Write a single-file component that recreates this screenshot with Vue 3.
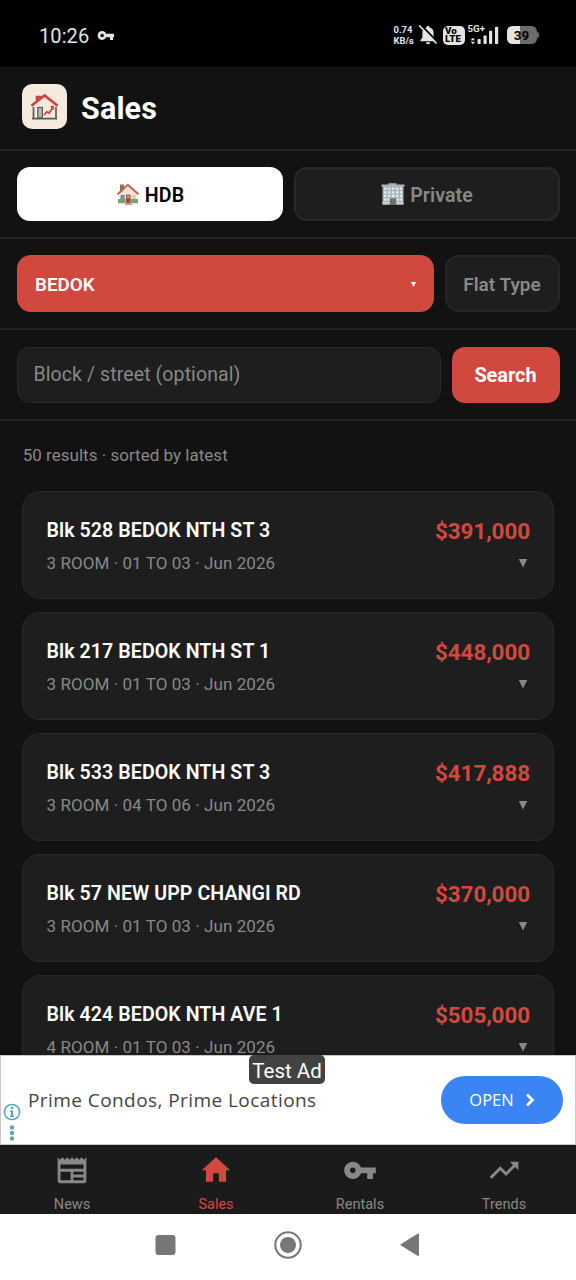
<script setup>
const listings = [
  { title: 'Blk 528 BEDOK NTH ST 3', meta: '3 ROOM · 01 TO 03 · Jun 2026', price: '$391,000' },
  { title: 'Blk 217 BEDOK NTH ST 1', meta: '3 ROOM · 01 TO 03 · Jun 2026', price: '$448,000' },
  { title: 'Blk 533 BEDOK NTH ST 3', meta: '3 ROOM · 04 TO 06 · Jun 2026', price: '$417,888' },
  { title: 'Blk 57 NEW UPP CHANGI RD', meta: '3 ROOM · 01 TO 03 · Jun 2026', price: '$370,000' },
  { title: 'Blk 424 BEDOK NTH AVE 1', meta: '4 ROOM · 01 TO 03 · Jun 2026', price: '$505,000' },
]

const keyPath =
  'M12.65 10C11.83 7.67 9.61 6 7 6c-3.31 0-6 2.69-6 6s2.69 6 6 6c2.61 0 4.83-1.67 5.65-4H17v4h4v-4h2v-4H12.65zM7 14c-1.1 0-2-.9-2-2s.9-2 2-2 2 .9 2 2-.9 2-2 2z'

const tabs = [
  {
    label: 'News',
    path: 'M20,11H4V8H20M20,15H13V13H20M20,19H13V17H20M11,19H4V13H11M20.33,4.67L18.67,3L17,4.67L15.33,3L13.67,4.67L12,3L10.33,4.67L8.67,3L7,4.67L5.33,3L3.67,4.67L2,3V19A2,2 0 0,0 4,21H20A2,2 0 0,0 22,19V3L20.33,4.67Z',
  },
  { label: 'Sales', active: true, path: 'M10,20V14H14V20H19V12H22L12,3L2,12H5V20H10Z' },
  { label: 'Rentals', path: keyPath },
  {
    label: 'Trends',
    path: 'M16 6l2.29 2.29-4.88 4.88-4-4L2 16.59 3.41 18l6-6 4 4 6.3-6.29L22 12V6z',
  },
]
</script>

<template>
  <div class="screen">
    <div class="status">
      <span class="clock">10:26</span>
      <svg class="vpn" viewBox="0 0 18 11"><path fill-rule="evenodd" d="M5.1 1a4.4 4.4 0 1 0 4 6.2h3.9v2.7h3V7.2h1V3.8H9.2A4.4 4.4 0 0 0 5.1 1zm0 2.7a1.8 1.8 0 1 1 0 3.6 1.8 1.8 0 0 1 0-3.6z" /></svg>
      <div class="status-right">
        <div class="speed"><span>0.74</span><span>KB/s</span></div>
        <svg class="bell" viewBox="0 0 20 22">
          <path d="M10 2c1 0 1.6.7 1.6 1.6 2.8.7 4 2.800 4 5.400v4.500l2 2.700v1H2.400v-1l2-2.700V9c0-2.600 1.400-4.700 4-5.400C8.400 2.700 9 2 10 2z" />
          <path d="M8 18.300h4.200a2.100 1.900 0 0 1-4.200 0z" />
          <path class="bell-gap" d="M2.500.6L20 18.400" />
          <path class="bell-slash" d="M1.200 1.500L18.500 19.500" />
        </svg>
        <div class="volte"><span>Vo</span><span>LTE</span></div>
        <div class="signal">
          <span class="net">5G+</span>
          <svg viewBox="0 0 30 20">
            <path d="M2.900 12.800l2.200 2.500H.7zM.7 16.700h4.400l-2.200 2.500z" />
            <rect x="7.500" y="14" width="3.200" height="5" rx=".8" />
            <rect x="13.500" y="10.500" width="3.200" height="8.500" rx=".8" />
            <rect x="19" y="5.800" width="3.200" height="13.200" rx=".8" />
            <rect x="25" y="1.800" width="3.200" height="17.200" rx=".8" />
          </svg>
        </div>
        <div class="battery"><span>39</span></div>
      </div>
    </div>

    <header class="header">
      <div class="logo">
        <svg viewBox="0 0 45 45">
          <path d="M11.500 23v11M34 23v11M10 34.600h25" fill="none" stroke="#5c5a56" stroke-width="1.700" />
          <rect x="15.800" y="23.500" width="4.600" height="10.300" fill="#b8b8b5" stroke="#5c5a56" stroke-width="1.200" />
          <path d="M15 17.500V13h3v2M9.500 21.800L22.500 11.500l13.200 10.300" fill="none" stroke="#c8463d" stroke-width="2.600" />
          <path d="M22 31l2.800-3.200 2.300 1.300 3.700-5.300" fill="none" stroke="#c8463d" stroke-width="1.800" />
          <path d="M28 22.300l4-.5-.3 4.500z" fill="#c8463d" />
        </svg>
      </div>
      <h1>Sales</h1>
    </header>

    <section class="row row-market">
      <button class="market on">
        <svg class="emoji" viewBox="0 0 24 24">
          <path d="M4 2.500h4v9H4z" fill="#9b6654" />
          <path d="M3.500 11.500L12.500 4l8 7.500V20h-17z" fill="#efe3d2" />
          <path d="M1.500 12.500L11.800 2.800l10.700 9.500" fill="none" stroke="#b9684e" stroke-width="2" />
          <path d="M2 17h7.500v4.200H2zM15 17h7v4.200h-7z" fill="#7fa06c" />
          <rect x="4.500" y="13" width="4.200" height="4" fill="#76929b" />
          <rect x="16" y="13" width="3.500" height="4" fill="#c9d0c2" />
          <rect x="10" y="12.600" width="4.600" height="9" fill="#a34e37" />
          <rect x="11" y="13.700" width="2.500" height="2.300" fill="#cda38b" />
          <path d="M9 21h7v2.200H9z" fill="#b6a69b" />
        </svg>
        <span>HDB</span>
      </button>
      <button class="market">
        <svg class="emoji" viewBox="0 0 24 24">
          <path d="M7.500 1.300h8v2h-8zM.500 2.500h23v2h-1V22.500h-21v-18h-1z" fill="#a9b5b8" />
          <path d="M3 6.700h2.500M7 6.700h2.500M11 6.700h2.500M15 6.700h2.500M19 6.700h2.300M3 10.300h2.500M7 10.300h2.500M11 10.300h2.500M15 10.300h2.500M19 10.300h2.300M3 13.900h2.500M7 13.900h2.500M11 13.900h2.500M15 13.900h2.500M19 13.900h2.300M3 17.500h2.500M6.500 17.500H8M16 17.500h2M19 17.500h2.300" stroke="#dcebee" stroke-width="2.300" />
          <path d="M9 16.500h6v6H9z" fill="#686f70" />
          <path d="M1.500 20h7v2.500h-7zM15.500 20h7v2.500h-7z" fill="#c8d0cf" />
        </svg>
        <span>Private</span>
      </button>
    </section>

    <section class="row row-town">
      <button class="town"><span>BEDOK</span><i class="caret small"></i></button>
      <button class="flat"><span>Flat Type</span></button>
    </section>

    <section class="row row-search">
      <div class="field">Block / street (optional)</div>
      <button class="search"><span>Search</span></button>
    </section>

    <main class="results">
      <p class="summary">50 results · sorted by latest</p>
      <article v-for="item in listings" :key="item.title" class="card">
        <div class="info">
          <div class="title">{{ item.title }}</div>
          <div class="meta">{{ item.meta }}</div>
        </div>
        <div class="side">
          <div class="price">{{ item.price }}</div>
          <i class="caret"></i>
        </div>
      </article>
    </main>

    <aside class="ad">
      <svg class="adinfo" viewBox="0 0 18 40">
        <circle cx="9" cy="10" r="7.600" fill="none" stroke="#58a9b8" stroke-width="1.500" />
        <circle cx="9" cy="6" r="1.300" />
        <path d="M7 8.500h3v5h1v1.500H7v-1.500h1V10H7z" />
        <circle cx="9" cy="25.500" r="2.200" />
        <circle cx="9" cy="31" r="2.200" />
        <circle cx="9" cy="36.500" r="2.200" />
      </svg>
      <span class="adtext">Prime Condos, Prime Locations</span>
      <button class="open">
        <span>OPEN</span>
        <svg viewBox="0 0 10 14"><path d="M2 1.500L7.500 7 2 12.500" /></svg>
      </button>
      <span class="adlabel">Test Ad</span>
    </aside>

    <nav class="tabs">
      <div v-for="tab in tabs" :key="tab.label" class="tab" :class="{ active: tab.active }">
        <svg viewBox="0 0 24 24"><path :d="tab.path" /></svg>
        <span>{{ tab.label }}</span>
      </div>
    </nav>

    <div class="system">
      <svg viewBox="0 0 576 66">
        <rect x="155.500" y="21" width="20" height="20" rx="3" />
        <circle cx="288" cy="31" r="12.700" fill="none" stroke="#777" stroke-width="2" />
        <circle cx="288" cy="31" r="8" />
        <path d="M401 30l16.500-10.300q1.500-.7 1.500.8v20.500q0 1.500-1.500.8L401 31.500q-1.300-.7 0-1.500z" />
      </svg>
    </div>
  </div>
</template>

<style>
body {
  margin: 0;
  background: #121212;
}
</style>

<style scoped>
.screen {
  width: 576px;
  height: 1280px;
  display: flex;
  flex-direction: column;
  overflow: hidden;
  background: #121212;
  color: #fff;
  font-family: Roboto, "Liberation Sans", sans-serif;
}
.screen * {
  box-sizing: border-box;
}
button {
  font: inherit;
  color: inherit;
  border: 0;
  margin: 0;
  padding: 0;
  display: flex;
  align-items: center;
  justify-content: center;
  white-space: nowrap;
}
.status {
  height: 67px;
  flex: none;
  background: #000;
  display: flex;
  align-items: center;
  padding: 4px 39.500px 0 39px;
  color: #e4e4e4;
}
.clock {
  font-size: 20px;
  letter-spacing: 0.1px;
  width: 58px;
}
.vpn {
  width: 18px;
  height: 11px;
  fill: #e4e4e4;
}
.status-right {
  margin-left: auto;
  display: flex;
  align-items: center;
}
.speed {
  display: flex;
  flex-direction: column;
  width: 24px;
  margin-top: -1px;
  font-size: 9.400px;
  font-weight: 700;
  line-height: 11px;
  white-space: nowrap;
}
.bell {
  width: 20px;
  height: 22px;
  margin-top: -2px;
  fill: #e4e4e4;
}
.bell-gap {
  stroke: #000;
  stroke-width: 2;
}
.bell-slash {
  stroke: #e4e4e4;
  stroke-width: 1.8;
}
.volte {
  width: 22px;
  height: 19px;
  margin: -1px 0 0 5px;
  border-radius: 5px;
  background: #e4e4e4;
  color: #000;
  font-size: 9.800px;
  font-weight: 900;
  line-height: 8.500px;
  padding: 1px 0 0 2.500px;
  display: flex;
  flex-direction: column;
}
.signal {
  position: relative;
  width: 30px;
  height: 20px;
  margin: -1px 0 0 5px;
}
.signal svg {
  display: block;
  width: 30px;
  height: 20px;
  fill: #e4e4e4;
}
.net {
  position: absolute;
  left: -2px;
  top: -1px;
  font-size: 9.700px;
  font-weight: 700;
  line-height: 9px;
}
.battery {
  position: relative;
  width: 30px;
  height: 18px;
  margin: -1px 0 0 7px;
  border-radius: 5.500px;
  background: linear-gradient(90deg, #e4e4e4 43%, #6c6c6c 43%);
  color: #000;
  font-size: 13.500px;
  font-weight: 700;
  line-height: 18px;
  text-align: center;
}
.battery::after {
  content: '';
  position: absolute;
  right: -2px;
  top: 6px;
  width: 2px;
  height: 6px;
  border-radius: 0 2px 2px 0;
  background: #6c6c6c;
}
.header {
  height: 84px;
  flex: none;
  border-bottom: 2px solid #232323;
  display: flex;
  align-items: center;
  padding: 0 22px 3px;
  gap: 14px;
}
.logo {
  width: 45px;
  height: 45px;
  border-radius: 10px;
  background: #f6e9dd;
}
.logo svg {
  display: block;
}
h1 {
  margin: 0;
  padding-top: 4px;
  font-size: 30.500px;
  font-weight: 700;
  line-height: 36px;
  letter-spacing: 0.150px;
}
.row {
  flex: none;
  display: flex;
  padding: 16px 16.500px 0;
  gap: 11px;
  border-bottom: 2px solid #232323;
}
.row-market {
  height: 88px;
}
.market {
  flex: 1;
  height: 54px;
  border-radius: 13px;
  background: #1e1e1e;
  border: 2px solid #292929;
  color: #888;
  font-size: 19.600px;
  font-weight: 600;
  letter-spacing: 0.100px;
  gap: 5px;
  padding-left: 1px;
}
.market span {
  padding-top: 2px;
}
.market.on {
  background: #fff;
  border-color: #fff;
  color: #000;
}
.emoji {
  width: 24px;
  height: 24px;
}
.row-town {
  height: 91px;
}
.town {
  flex: 1;
  height: 57px;
  border-radius: 14px;
  background: #d1483f;
  justify-content: space-between;
  padding: 2px 17.500px 0 18.500px;
  font-size: 18.800px;
  font-weight: 600;
}
.flat {
  width: 115px;
  height: 57px;
  border-radius: 14px;
  background: #1e1e1e;
  border: 2px solid #262626;
  padding-top: 2px;
  color: #888;
  font-size: 19px;
  font-weight: 600;
}
.row-search {
  height: 91px;
  padding-top: 17px;
}
.field {
  flex: 1;
  height: 56px;
  border-radius: 13px;
  background: #1e1e1e;
  border: 1.500px solid #292929;
  color: #888;
  font-size: 19.500px;
  letter-spacing: 0.100px;
  line-height: 53px;
  padding-left: 16px;
}
.search {
  width: 108px;
  height: 56px;
  border-radius: 13px;
  background: #d1483f;
  font-size: 19.900px;
  font-weight: 700;
  padding-top: 1px;
}
.results {
  flex: 1;
  min-height: 0;
  overflow: hidden;
  padding: 0 22px;
}
.summary {
  margin: 0;
  height: 70px;
  line-height: 69px;
  color: #888;
  font-size: 17px;
  letter-spacing: 0.020px;
  padding-left: 0.700px;
}
.card {
  height: 108px;
  margin-bottom: 13px;
  border: 1.500px solid #292929;
  border-radius: 18px;
  background: #1e1e1e;
  display: flex;
  justify-content: space-between;
  padding: 26px 23px 0 23.500px;
}
.title {
  font-size: 19.600px;
  font-weight: 600;
  line-height: 26px;
  letter-spacing: 0.070px;
}
.meta {
  margin-top: 8px;
  font-size: 17px;
  letter-spacing: 0.070px;
  line-height: 22px;
  color: #888;
}
.side {
  display: flex;
  flex-direction: column;
  align-items: flex-end;
}
.price {
  margin-top: -1px;
  font-size: 22.500px;
  font-weight: 700;
  letter-spacing: -0.120px;
  line-height: 28px;
  color: #d1483f;
}
.caret {
  width: 9px;
  height: 9px;
  background: #888;
  clip-path: polygon(0 0, 100% 0, 50% 100%);
  margin: 13.500px 2.500px 0 0;
}
.caret.small {
  width: 5px;
  height: 5px;
  margin: 0;
  background: #fff;
}
.ad {
  position: relative;
  flex: none;
  height: 90px;
  background: #fff;
  border: 1px solid #c8c8c8;
  display: flex;
  align-items: center;
  padding: 0 12px 0 2px;
}
.adinfo {
  width: 18px;
  height: 40px;
  margin-top: 44px;
  fill: #58a9b8;
}
.adtext {
  margin-left: 7px;
  color: #444;
  font-family: "Open Sans", "Noto Sans", sans-serif;
  font-size: 19px;
  letter-spacing: 0.430px;
}
.open {
  margin-left: auto;
  width: 122px;
  height: 48px;
  border-radius: 24px;
  background: #3b84f5;
  font-family: "Open Sans", "Noto Sans", sans-serif;
  font-size: 16.500px;
  gap: 11px;
}
.open span {
  margin-top: -1px;
}
.open svg {
  width: 10px;
  height: 14px;
  fill: none;
  stroke: #fff;
  stroke-width: 2.700;
}
.adlabel {
  position: absolute;
  left: 248px;
  top: -1px;
  width: 76px;
  height: 29px;
  border-radius: 5px;
  background: #424242;
  font-size: 20.500px;
  line-height: 32px;
  text-align: center;
  white-space: nowrap;
}
.tabs {
  height: 69px;
  flex: none;
  background: #1b1b1b;
  display: flex;
}
.tab {
  flex: 1;
  display: flex;
  flex-direction: column;
  align-items: center;
  padding-top: 7.500px;
  color: #888;
  font-size: 14.500px;
  line-height: 18px;
}
.tab svg {
  width: 36px;
  height: 36px;
  margin-bottom: 9px;
  fill: currentColor;
}
.active {
  color: #d1483f;
}
.system {
  flex: none;
  height: 66px;
  background: #fff;
}
.system svg {
  display: block;
  width: 576px;
  height: 66px;
  fill: #777;
}
</style>
